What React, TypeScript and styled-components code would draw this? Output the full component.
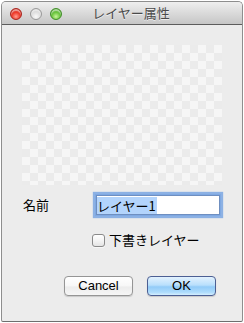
import React from "react";
import styled, { createGlobalStyle } from "styled-components";

const GlobalStyle = createGlobalStyle`
  html, body { margin: 0; padding: 0; background: #ffffff; }
  body { font-family: "Liberation Sans", "Noto Sans CJK JP", sans-serif; }
  * { box-sizing: border-box; }
`;

const Window = styled.div`
  margin: 1px 0 0 1px;
  width: 242px;
  height: 321px;
  border: 1px solid #8e8e8e;
  border-bottom-color: #6e6e6e;
  border-radius: 5px 5px 2px 2px;
  background: #ececec;
  display: flex;
  flex-direction: column;
  overflow: hidden;
`;

const TitleBar = styled.div`
  height: 23px;
  flex: none;
  display: grid;
  grid-template-columns: 1fr auto 1fr;
  align-items: center;
  padding: 0 8px;
  background: linear-gradient(#efefef 0%, #dcdcdc 45%, #c6c6c6 100%);
  border-bottom: 1px solid #5c5c5c;
`;

const Lights = styled.div`
  display: flex;
  gap: 8px;
  align-items: center;
  margin-top: 1px;
`;

const Light = styled.span<{ $c: "red" | "gray" | "green" }>`
  width: 12px;
  height: 12px;
  border-radius: 50%;
  border: 1px solid
    ${(p) => (p.$c === "red" ? "#a8231c" : p.$c === "green" ? "#3f8d26" : "#9a9a9a")};
  background: ${(p) =>
    p.$c === "red"
      ? "radial-gradient(circle at 50% 75%, #ff9c8f 0%, #ef3b2c 45%, #b81a10 100%)"
      : p.$c === "green"
      ? "radial-gradient(circle at 50% 75%, #c8f59a 0%, #6cc63f 45%, #3c9420 100%)"
      : "radial-gradient(circle at 50% 75%, #fafafa 0%, #dedede 50%, #b9b9b9 100%)"};
  box-shadow: inset 0 2px 1px rgba(255, 255, 255, 0.55);
`;

const Title = styled.div`
  font-family: "Noto Sans CJK JP", sans-serif;
  font-size: 13px;
  line-height: 16px;
  color: #4a4a4a;
  margin-left: 18px;
  text-shadow: 0 1px 0 rgba(255, 255, 255, 0.6);
`;

const Content = styled.div`
  flex: 1;
  display: flex;
  flex-direction: column;
  padding: 20px 20px 0 20px;
`;

const Checker = styled.div`
  width: 200px;
  height: 140px;
  background-color: #f6f6f6;
  background-image: conic-gradient(
    #ebebeb 0 25%,
    #f6f6f6 0 50%,
    #ebebeb 0 75%,
    #f6f6f6 0
  );
  background-size: 16px 16px;
`;

const FieldRow = styled.div`
  margin-top: 10px;
  height: 20px;
  display: flex;
  align-items: center;
`;

const Label = styled.span`
  width: 74px;
  font-family: "Noto Sans CJK JP", sans-serif;
  font-size: 13px;
  line-height: 16px;
  color: #000;
  padding-left: 1px;
`;

const Field = styled.div`
  width: 124px;
  height: 20px;
  background: #ffffff;
  border: 1px solid #6f8fc0;
  box-shadow: 0 0 0 1px #7fa9e3, 0 0 1px 3px rgba(108, 157, 226, 0.75);
  display: flex;
  align-items: center;
`;

const Selected = styled.span`
  font-family: "Noto Sans CJK JP", sans-serif;
  font-size: 13px;
  line-height: 17px;
  background: #b3d4fc;
  color: #000;
  padding-right: 1px;
`;

const CheckRow = styled.label`
  margin-top: 17px;
  padding-left: 70px;
  display: flex;
  align-items: center;
  gap: 4px;
`;

const Box = styled.span`
  width: 13px;
  height: 13px;
  border: 1px solid #8a8a8a;
  border-radius: 3px;
  background: linear-gradient(#ffffff 0%, #f4f4f4 50%, #e4e4e4 100%);
  box-shadow: 0 1px 0 rgba(255, 255, 255, 0.6);
`;

const CheckText = styled.span`
  font-family: "Noto Sans CJK JP", sans-serif;
  font-size: 13px;
  line-height: 16px;
  color: #000;
`;

const ButtonRow = styled.div`
  margin-top: 28px;
  display: flex;
  justify-content: flex-end;
  gap: 14px;
  padding-right: 6px;
`;

const Button = styled.button<{ $primary?: boolean }>`
  width: 69px;
  height: 20px;
  padding: 0;
  font-family: "Liberation Sans", sans-serif;
  font-size: 13px;
  line-height: 18px;
  color: #000;
  border-radius: 4px;
  border: 1px solid ${(p) => (p.$primary ? "#4c5f93" : "#959595")};
  background: ${(p) =>
    p.$primary
      ? "linear-gradient(#e3f2fe 0%, #b9dffc 45%, #92cbf8 55%, #aedcfc 85%, #d5efff 100%)"
      : "linear-gradient(#ffffff 0%, #f7f7f7 50%, #ececec 55%, #f6f6f6 100%)"};
  box-shadow: 0 1px 1px rgba(0, 0, 0, 0.15);
`;

export default function App() {
  return (
    <>
      <GlobalStyle />
      <Window>
        <TitleBar>
          <Lights>
            <Light $c="red" />
            <Light $c="gray" />
            <Light $c="green" />
          </Lights>
          <Title>レイヤー属性</Title>
          <span />
        </TitleBar>
        <Content>
          <Checker />
          <FieldRow>
            <Label>名前</Label>
            <Field>
              <Selected>レイヤー1</Selected>
            </Field>
          </FieldRow>
          <CheckRow>
            <Box />
            <CheckText>下書きレイヤー</CheckText>
          </CheckRow>
          <ButtonRow>
            <Button>Cancel</Button>
            <Button $primary>OK</Button>
          </ButtonRow>
        </Content>
      </Window>
    </>
  );
}
